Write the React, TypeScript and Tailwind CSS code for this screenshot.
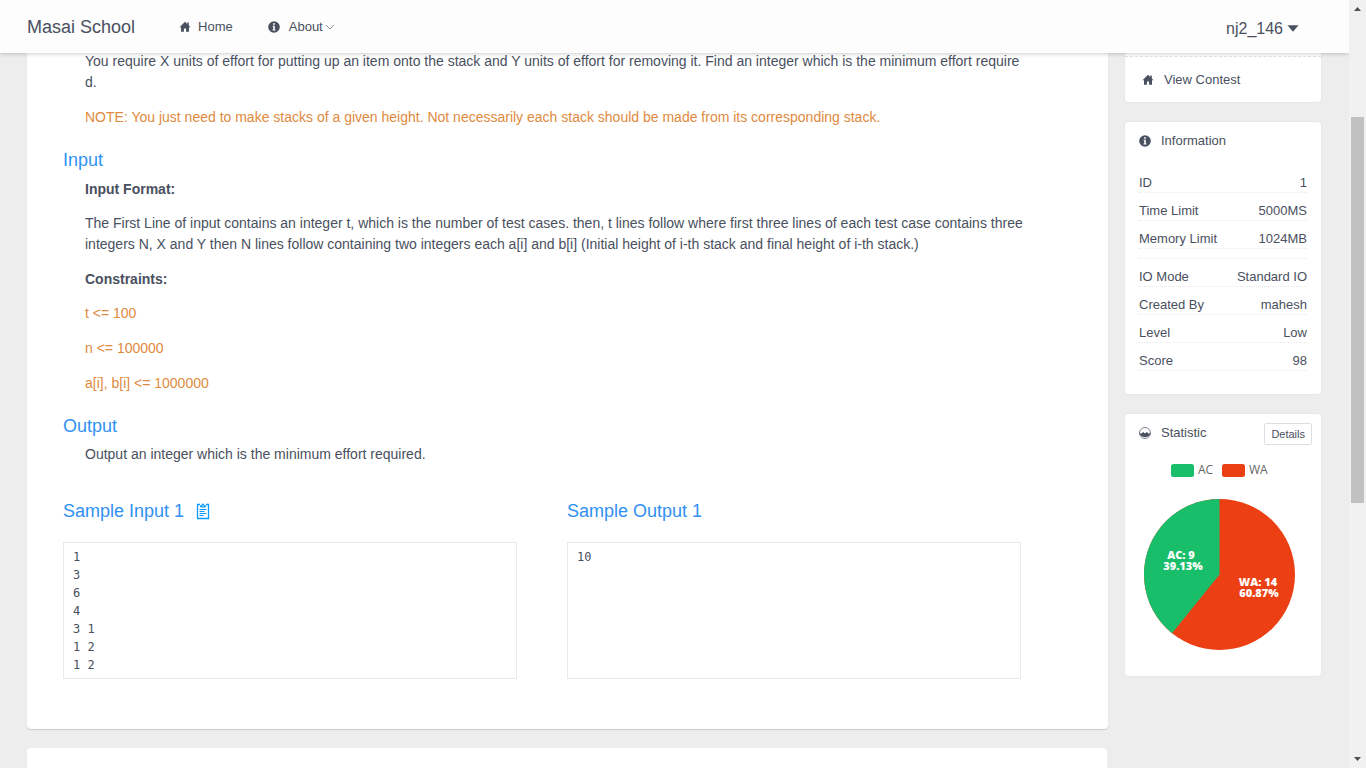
import React from "react";

const info: [string, string][][] = [
  [
    ["ID", "1"],
    ["Time Limit", "5000MS"],
    ["Memory Limit", "1024MB"],
  ],
  [
    ["IO Mode", "Standard IO"],
    ["Created By", "mahesh"],
    ["Level", "Low"],
    ["Score", "98"],
  ],
];

function HomeIcon() {
  return (
    <svg viewBox="0 0 12 12" className="size-3 shrink-0" fill="currentColor" aria-hidden="true">
      <path d="M6 0.800 0.500 6.300H2V10.800H4.900V7.500H7.100V10.800H10V6.300H11.500L9.800 4.600V1.600H8.200V3Z" />
    </svg>
  );
}

function InfoIcon() {
  return (
    <svg viewBox="0 0 12 12" className="size-3 shrink-0" aria-hidden="true">
      <circle cx="6" cy="6" r="5.8" fill="currentColor" />
      <path d="M5.100 2.300H6.900V3.800H5.100ZM4.500 4.800H6.800V8.600H7.500V9.400H4.500V8.600H5.200V5.600H4.500Z" fill="#fff" />
    </svg>
  );
}

function StatIcon() {
  return (
    <svg viewBox="0 0 12 12" className="size-3 shrink-0" aria-hidden="true">
      <circle cx="6" cy="6" r="5.500" fill="none" stroke="currentColor" strokeWidth="0.7" />
      <path d="M0.400 5.600 2.200 6.800 4.200 5 6 6.400 7.800 5 9.800 6.800 11.600 5.600A5.700 5.700 0 0 1 0.400 5.600Z" fill="currentColor" />
    </svg>
  );
}

function ClipboardIcon() {
  return (
    <svg viewBox="0 0 14 17" className="h-[17px] w-3.5" fill="none" stroke="currentColor" aria-hidden="true">
      <path d="M4 1.500H1.500V15.500H12.500V1.500H10" strokeWidth="1.3" />
      <path d="M4.500 4V2.700H6V1.500Q7 0.200 8 1.500V2.700H9.500V4Z" fill="currentColor" fillOpacity="0.5" />
      <path d="M3.500 6.500H10.500M3.500 8.500H8.500M3.500 10.500H10.500M3.500 12.500H7.500" />
    </svg>
  );
}

function Pie() {
  return (
    <svg viewBox="0 0 196 212" className="mx-auto block w-[196px]" role="img" aria-label="Submission statistics">
      <g fontFamily="'Open Sans', 'Noto Sans', sans-serif">
        <rect x="46" y="13" width="23" height="13" rx="2.500" fill="#19be6b" />
        <text x="73" y="23" fontSize="12" fill="#666">AC</text>
        <rect x="97" y="13" width="23" height="13" rx="2.500" fill="#ed3f14" />
        <text x="124" y="23" fontSize="12" fill="#666">WA</text>
        <circle cx="94.500" cy="123.500" r="75.500" fill="#ed3f14" />
        <path d="M94.500 123.500V48A75.500 75.500 0 0 0 47 182.200Z" fill="#19be6b" />
        <g fill="#fff" fontSize="11" fontWeight="800" textAnchor="middle">
          <text>
            <tspan x="56" y="108">AC: 9</tspan>
            <tspan x="58" y="119">39.13%</tspan>
          </text>
          <text>
            <tspan x="133" y="135">WA: 14</tspan>
            <tspan x="134" y="146">60.87%</tspan>
          </text>
        </g>
      </g>
    </svg>
  );
}

function Heading({ children }: { children: React.ReactNode }) {
  return <h2 className="text-[18px] leading-[27px] text-[#3091f2]">{children}</h2>;
}

function Sample({ children }: { children: string }) {
  return (
    <pre className="h-[137px] border border-[#e9eaec] px-[9px] py-[5px] font-['DejaVu_Sans_Mono',monospace] text-[12px] leading-[18px]">
      {children}
    </pre>
  );
}

const panel = "rounded-[3px] bg-white shadow-[0_0_1px_rgba(0,0,0,0.2)]";

export default function App() {
  return (
    <div className="flex h-screen overflow-hidden bg-[#ededed] font-['Liberation_Sans',Arial,sans-serif] text-[#495060]">
      <div className="relative min-w-0 flex-1 overflow-hidden">
        <header className="absolute inset-x-0 top-0 z-10 flex h-[53px] items-center bg-[#fdfdfd] pl-[27px] pr-[50px] shadow-[0_1px_4px_rgba(0,0,0,0.2)]">
          <a href="#" className="pt-px text-[18px]">Masai School</a>
          <nav className="ml-11 flex flex-1 items-center gap-[35px] text-[13px]">
            <a href="#" className="flex items-center gap-[7px]">
              <HomeIcon />
              Home
            </a>
            <button type="button" className="flex items-center gap-[9px]">
              <InfoIcon />
              <span className="flex items-center gap-0.5">
                About
                <svg viewBox="0 0 10 6" className="h-1.5 w-2.5" fill="none" stroke="#8c919b" aria-hidden="true">
                  <path d="M1 1 5 5 9 1" />
                </svg>
              </span>
            </button>
          </nav>
          <button type="button" className="flex items-center gap-1 pt-1 text-[16px]">
            nj2_146
            <svg viewBox="0 0 12 7" className="h-[7px] w-3" fill="currentColor" aria-hidden="true">
              <path d="M0.500 0.300H11.500L6 6.800Z" />
            </svg>
          </button>
        </header>

        <div className="flex items-start gap-[17px] pl-[27px] pr-7 pt-[51px]">
          <main className="flex min-w-0 flex-1 flex-col gap-[19px]">
            <section className="rounded-b-[4px] bg-white pl-9 pr-[37px] pb-[50px] shadow-[0_1px_1px_rgba(0,0,0,0.15)]">
              <div className="ml-[22px] mr-5 flex flex-col gap-3.5 text-[14px] leading-[21px]">
                <p className="break-all pr-7">
                  You require X units of effort for putting up an item onto the stack and Y units of effort for removing
                  it. Find an integer which is the minimum effort required.
                </p>
                <p className="text-[#e08a40]">
                  NOTE: You just need to make stacks of a given height. Not necessarily each stack should be made from
                  its corresponding stack.
                </p>
              </div>
              <div className="mt-[19px]">
                <Heading>Input</Heading>
              </div>
              <div className="ml-[22px] mr-5 mt-[5px] text-[14px] leading-[21px]">
                <p className="font-bold">Input Format:</p>
                <p className="mt-[13px]">
                  The First Line of input contains an integer t, which is the number of test cases. then, t lines follow
                  where first three lines of each test case contains three integers N, X and Y then N lines follow
                  containing two integers each a[i] and b[i] (Initial height of i-th stack and final height of i-th
                  stack.)
                </p>
                <p className="mt-3.5 font-bold">Constraints:</p>
                <div className="mt-[13px] flex flex-col gap-3.5 text-[#e08a40]">
                  <p>t &lt;= 100</p>
                  <p>n &lt;= 100000</p>
                  <p>a[i], b[i] &lt;= 1000000</p>
                </div>
              </div>
              <div className="mt-[19px]">
                <Heading>Output</Heading>
              </div>
              <p className="ml-[22px] mr-5 mt-1 text-[14px] leading-[21px]">
                Output an integer which is the minimum effort required.
              </p>
              <div className="mt-[33px] flex">
                <div className="flex w-1/2 flex-col gap-[17px] pr-[50px]">
                  <div className="flex items-center gap-3">
                    <Heading>Sample Input 1</Heading>
                    <button type="button" aria-label="Copy sample input" className="text-[#0e9bff]">
                      <ClipboardIcon />
                    </button>
                  </div>
                  <Sample>{"1\n3\n6\n4\n3 1\n1 2\n1 2"}</Sample>
                </div>
                <div className="flex w-1/2 flex-col gap-[17px] pr-[50px]">
                  <Heading>Sample Output 1</Heading>
                  <Sample>10</Sample>
                </div>
              </div>
            </section>
            <section className="mr-px h-24 rounded-[4px] bg-white" />
          </main>

          <aside className="flex w-[196px] shrink-0 flex-col gap-5 text-[13px]">
            <div className={panel}>
              <a
                href="#"
                className="mt-[5px] flex h-[46px] items-center gap-2.5 border-t border-dashed border-[#e3e4e6] pl-[17px]"
              >
                <HomeIcon />
                View Contest
              </a>
            </div>

            <section className={`${panel} pb-[23px]`}>
              <h3 className="flex h-[37px] items-center gap-2.5 px-3.5">
                <InfoIcon />
                Information
              </h3>
              <dl className="mx-3.5 mt-[15px] flex flex-col">
                {info.map((group, i) => (
                  <div key={i} className={i > 0 ? "mt-[9px] border-t border-dotted border-[#e9eaec] pt-[9px]" : ""}>
                    {group.map(([label, value], j) => (
                      <div
                        key={label}
                        className={
                          j > 0
                            ? "mt-[9px] flex justify-between border-b border-dotted border-[#e9eaec] leading-[18px]"
                            : "flex justify-between border-b border-dotted border-[#e9eaec] leading-[18px]"
                        }
                      >
                        <dt>{label}</dt>
                        <dd>{value}</dd>
                      </div>
                    ))}
                  </div>
                ))}
              </dl>
            </section>

            <section className={`${panel} pb-[13px]`}>
              <div className="flex h-[37px] items-center justify-between pl-3.5 pr-[9px]">
                <h3 className="flex items-center gap-2.5">
                  <StatIcon />
                  Statistic
                </h3>
                <button type="button" className="mt-[3px] h-[22px] rounded-[2px] border border-[#dddee1] px-1.5 text-[11px]">
                  Details
                </button>
              </div>
              <Pie />
            </section>
          </aside>
        </div>
      </div>

      <div className="flex w-[17px] shrink-0 flex-col items-center bg-[#f1f1f1]" aria-hidden="true">
        <svg viewBox="0 0 17 17" className="size-[17px]" fill="#505050">
          <path d="M5 11 8.500 7 12 11Z" />
        </svg>
        <div className="mt-[100px] h-[386px] w-[13px] bg-[#c1c1c1]" />
        <svg viewBox="0 0 17 17" className="mt-auto size-[17px]" fill="#505050">
          <path d="M5 6 8.500 10 12 6Z" />
        </svg>
      </div>
    </div>
  );
}
